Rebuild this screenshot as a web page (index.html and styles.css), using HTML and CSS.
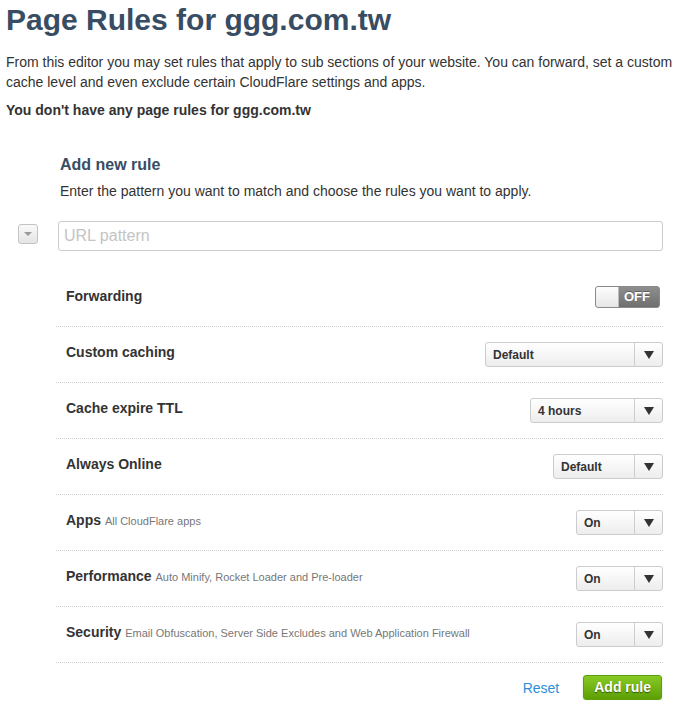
FILE: index.html
```html
<!DOCTYPE html>
<html lang="en">
<head>
  <meta charset="UTF-8">
  <title>Page Rules for ggg.com.tw</title>
  <link rel="stylesheet" href="styles.css">
</head>
<body>
  <div id="page">
    <h1>Page Rules for ggg.com.tw</h1>
    <p class="intro">From this editor you may set rules that apply to sub sections of your website. You can forward, set a custom cache level and even exclude certain CloudFlare settings and apps.</p>
    <p class="empty">You don't have any page rules for ggg.com.tw</p>

    <div class="rule-form">
      <h2>Add new rule</h2>
      <p class="hint">Enter the pattern you want to match and choose the rules you want to apply.</p>

      <div class="pattern">
        <button class="expand"><span class="caret"></span></button>
        <input type="text" class="url" placeholder="URL pattern">
      </div>

      <div class="rule">
        <span class="label">Forwarding</span>
        <div class="toggle">
          <span class="knob"></span>
          <span class="state">OFF</span>
        </div>
      </div>

      <div class="rule">
        <span class="label">Custom caching</span>
        <div class="select w-cache"><span class="value">Default</span><span class="arrow"></span></div>
      </div>

      <div class="rule">
        <span class="label">Cache expire TTL</span>
        <div class="select w-ttl"><span class="value">4 hours</span><span class="arrow"></span></div>
      </div>

      <div class="rule">
        <span class="label">Always Online</span>
        <div class="select w-online"><span class="value">Default</span><span class="arrow"></span></div>
      </div>

      <div class="rule">
        <span class="label">Apps <small>All CloudFlare apps</small></span>
        <div class="select w-on"><span class="value">On</span><span class="arrow"></span></div>
      </div>

      <div class="rule">
        <span class="label">Performance <small>Auto Minify, Rocket Loader and Pre-loader</small></span>
        <div class="select w-on"><span class="value">On</span><span class="arrow"></span></div>
      </div>

      <div class="rule">
        <span class="label">Security <small>Email Obfuscation, Server Side Excludes and Web Application Firewall</small></span>
        <div class="select w-on"><span class="value">On</span><span class="arrow"></span></div>
      </div>

      <div class="actions">
        <a href="#" class="reset">Reset</a>
        <button class="add">Add rule</button>
      </div>
    </div>
  </div>
</body>
</html>
```

FILE: styles.css
```css
body {
  margin: 0;
  font-family: "Liberation Sans", Arial, sans-serif;
  font-size: 14px;
  color: #333;
  background-color: white;
}

#page {
  padding: 2px 6px 0 6px;
}

h1 {
  margin: 0;
  font-size: 30px;
  line-height: 36px;
  color: #384d63;
}

.intro {
  margin: 14px 0 0 0;
  line-height: 20px;
}

.empty {
  margin: 8px 0 0 0;
  line-height: 20px;
  font-weight: bold;
}

.rule-form {
  margin: 35px 0 0 12px;
  width: 645px;
}

.rule-form h2 {
  margin: 0;
  padding-left: 42px;
  font-size: 16px;
  line-height: 20px;
  color: #384d63;
}

.rule-form .hint {
  margin: 6px 0 0 0;
  padding-left: 42px;
  line-height: 20px;
}

.pattern {
  display: flex;
  align-items: flex-start;
  margin-top: 20px;
}

.pattern .expand {
  width: 20px;
  height: 20px;
  margin-top: 3px;
  padding: 0;
  border: 1px solid #c4c4c4;
  border-radius: 3px;
  background: linear-gradient(#fafafa, #e4e4e4);
  display: flex;
  align-items: center;
  justify-content: center;
}

.caret {
  width: 0;
  height: 0;
  border-left: 4px solid transparent;
  border-right: 4px solid transparent;
  border-top: 4px solid #999;
}

.pattern .url {
  margin-left: auto;
  width: 605px;
  height: 30px;
  box-sizing: border-box;
  padding: 0 5px;
  border: 1px solid #ccc;
  border-radius: 3px;
  font-family: inherit;
  font-size: 16px;
  color: #333;
}

.pattern .url::placeholder {
  color: #c4c4c4;
}

.rule {
  display: flex;
  align-items: center;
  justify-content: space-between;
  margin-left: 38px;
  height: 55px;
  padding-left: 10px;
  border-bottom: 1px dotted #ccc;
}

.pattern + .rule {
  margin-top: 20px;
}

.rule .label {
  font-weight: bold;
  margin-bottom: 5px;
}

.rule .label small {
  font-size: 11px;
  font-weight: normal;
  color: #777;
}

.toggle {
  display: flex;
  width: 65px;
  height: 22px;
  box-sizing: border-box;
  margin: 0 3px 3px 0;
  border: 1px solid #8a8a8a;
  border-radius: 3px;
  overflow: hidden;
  background: linear-gradient(#8e8e8e, #6f6f6f);
}

.toggle .knob {
  width: 22px;
  background: linear-gradient(#fdfdfd, #e6e6e6);
  border-right: 1px solid #bbb;
}

.toggle .state {
  flex: 1;
  text-align: center;
  padding-right: 4px;
  color: white;
  font-size: 13px;
  font-weight: bold;
  line-height: 20px;
  text-shadow: 0 -1px 0 rgba(0, 0, 0, 0.3);
}

.select {
  display: flex;
  height: 25px;
  box-sizing: border-box;
  border: 1px solid #ccc;
  border-radius: 3px;
  background: linear-gradient(#ffffff, #ededed);
}

.select .value {
  flex: 1;
  padding-left: 7px;
  font-size: 12px;
  font-weight: bold;
  line-height: 24px;
}

.select .arrow {
  width: 27px;
  border-left: 1px solid #ccc;
  display: flex;
  align-items: center;
  justify-content: center;
}

.select .arrow::after {
  content: "";
  width: 0;
  height: 0;
  border-left: 5px solid transparent;
  border-right: 5px solid transparent;
  border-top: 8px solid #333;
}

.w-cache { width: 178px; }
.w-ttl { width: 133px; }
.w-online { width: 110px; }
.w-on { width: 87px; }

.actions {
  display: flex;
  justify-content: flex-end;
  align-items: center;
  gap: 24px;
  margin-top: 12px;
}

.reset {
  color: #2b8fd8;
  text-decoration: none;
}

.add {
  height: 25px;
  margin-right: 1px;
  padding: 0 10px;
  border: 1px solid #5e9e0c;
  border-radius: 3px;
  background: linear-gradient(#88ca24, #5c9f06);
  box-shadow: 0 1px 2px rgba(0, 0, 0, 0.2);
  color: white;
  font-family: inherit;
  font-size: 14px;
  font-weight: bold;
  line-height: 23px;
  text-shadow: 0 1px 1px rgba(0, 0, 0, 0.5);
}
```
